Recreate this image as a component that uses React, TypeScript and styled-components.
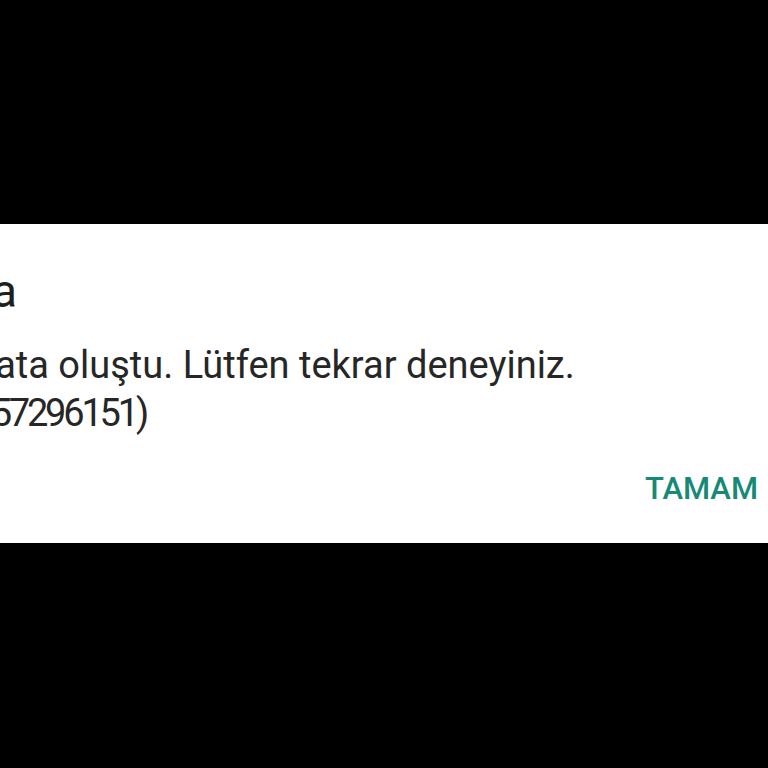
import { FC } from 'react'
import styled, { createGlobalStyle } from 'styled-components'

const GlobalStyle = createGlobalStyle`
  html, body {
    margin: 0;
    padding: 0;
    background: #000;
    overflow: hidden;
  }
  body {
    font-family: Roboto, "Noto Sans", sans-serif;
  }
`

const Screen = styled.div`
  width: 768px;
  height: 768px;
  padding-top: 224px;
  box-sizing: border-box;
  background: #000;
  overflow: hidden;
`

// dialog is wider than the view, its left part sits off screen
const Dialog = styled.div<{ $shift: number }>`
  width: ${(p) => 768 + p.$shift}px;
  margin-left: ${(p) => -p.$shift}px;
  height: 319px;
  box-sizing: border-box;
  background: #fff;
  padding: 40px 10px 34px 0;
  display: flex;
  flex-direction: column;
`

const Title = styled.h2`
  margin: 0;
  font-size: 46px;
  line-height: 54px;
  font-weight: 400;
  color: #1f1f1f;
`

const Message = styled.p`
  margin: 23px 0 0;
  font-size: 38px;
  line-height: 48px;
  color: #262626;
  white-space: nowrap;
`

// the error code digits are set tighter than the sentence
const Code = styled.span`
  letter-spacing: -3.2px;
`

const Actions = styled.div`
  margin-top: auto;
  display: flex;
  justify-content: flex-end;
`

const TextButton = styled.button`
  border: 0;
  background: none;
  padding: 0;
  font-family: inherit;
  font-size: 31px;
  line-height: 40px;
  font-weight: 500;
  color: #168a76;
  cursor: pointer;
`

const App: FC = () => {
  return (
    <Screen>
      <GlobalStyle />
      <Dialog $shift={81}>
        <Title>Hata</Title>
        <Message>
          Bir hata oluştu. Lütfen tekrar deneyiniz.
          <br />
          (Nr: <Code>57296151)</Code>
        </Message>
        <Actions>
          <TextButton>TAMAM</TextButton>
        </Actions>
      </Dialog>
    </Screen>
  )
}

export default App
